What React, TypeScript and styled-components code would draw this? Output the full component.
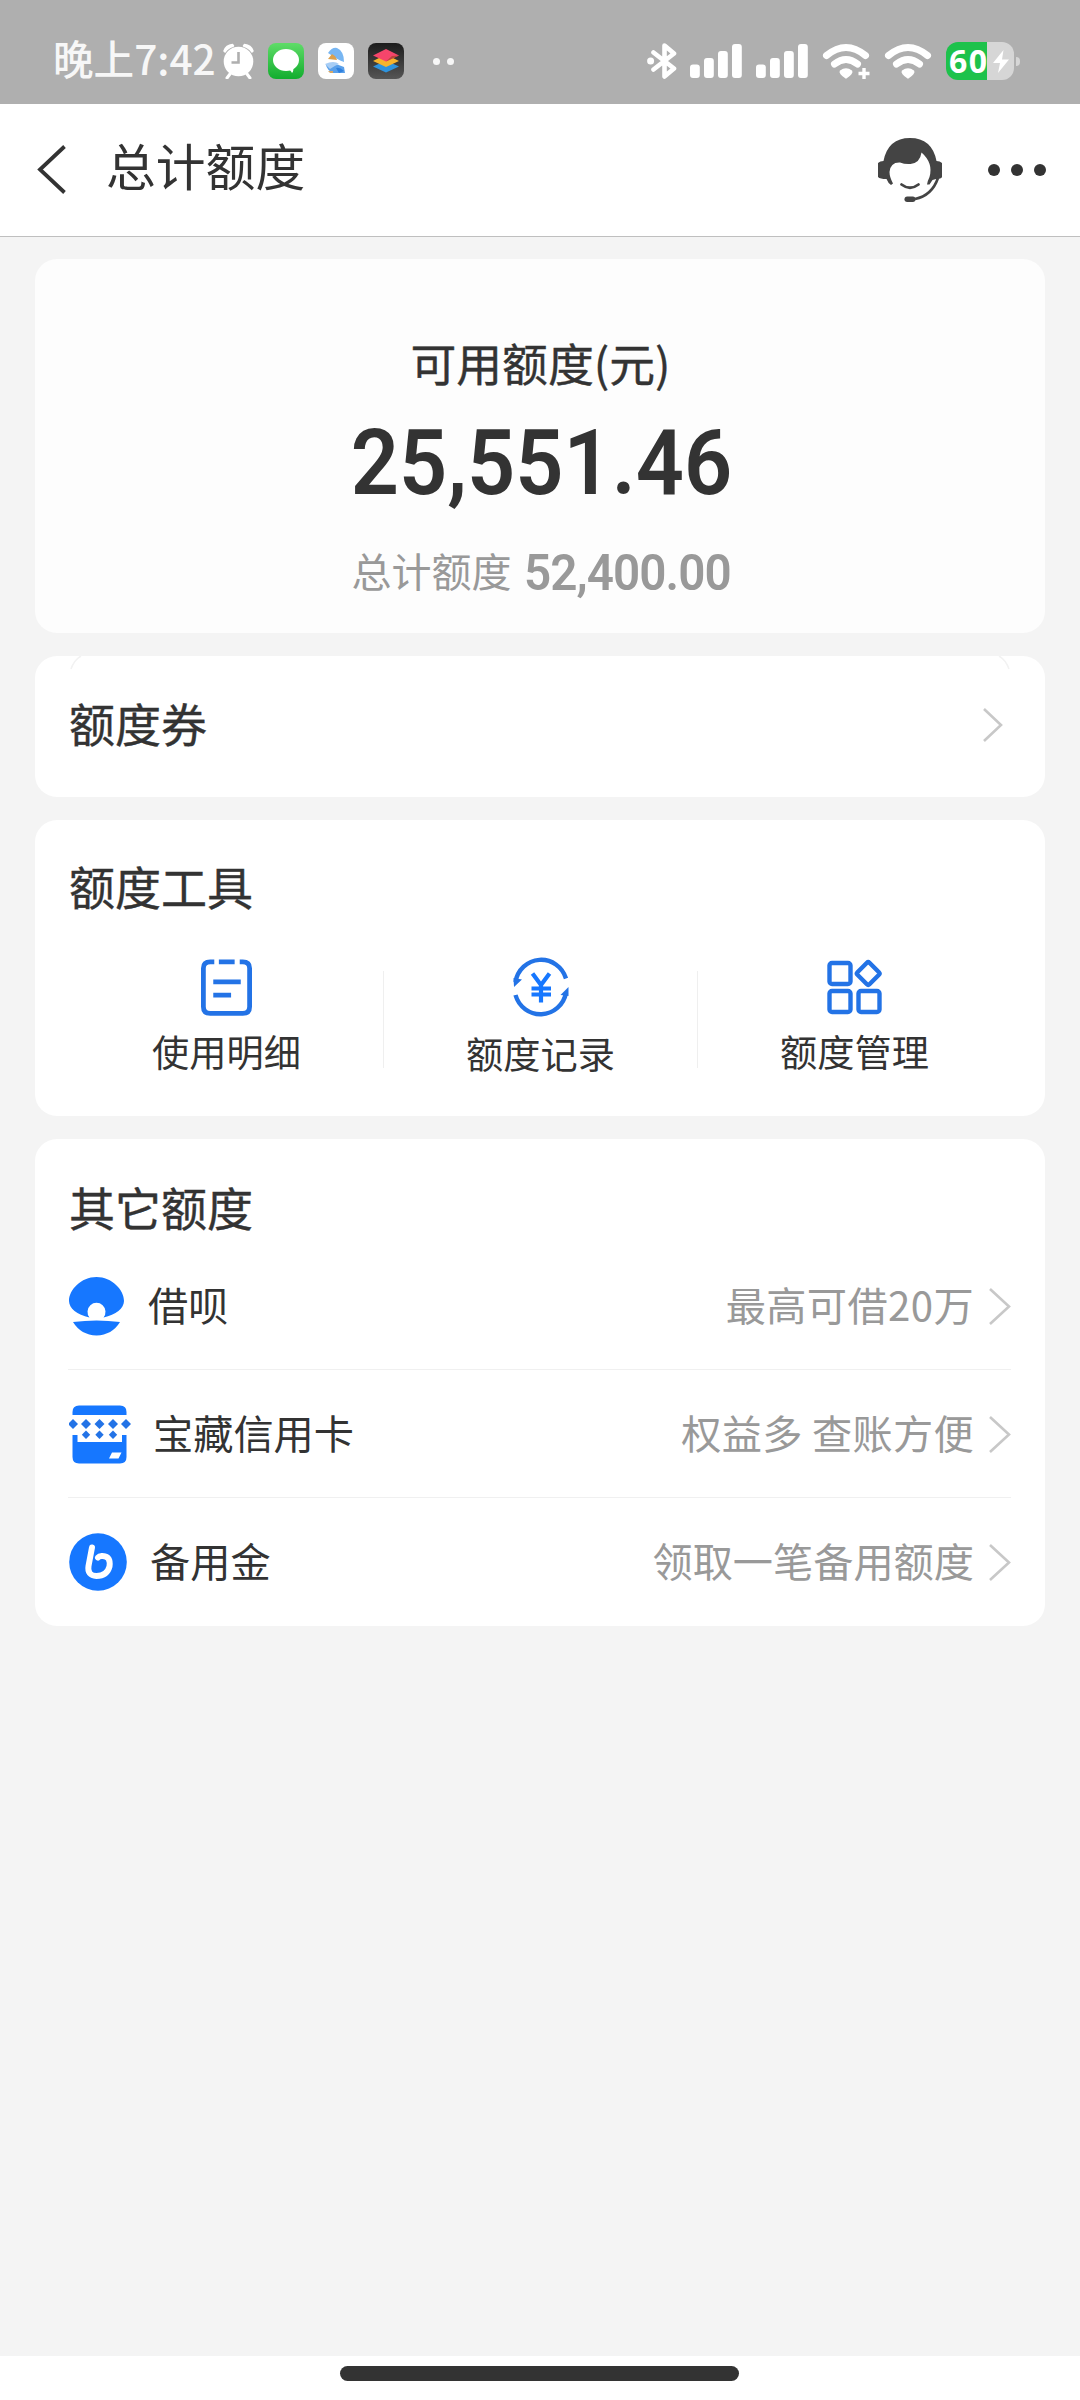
import React from "react";
import styled, { createGlobalStyle } from "styled-components";

const BLUE = "#1677ff";
const ICON_BLUE = "#2373e6";

const GlobalStyle = createGlobalStyle`
  * { box-sizing: border-box; }
  body { margin: 0; background: #f4f4f4; }
  svg { display: block; flex: none; }
`;

const Page = styled.div`
  width: 1080px;
  height: 2400px;
  display: flex;
  flex-direction: column;
  background: #f4f4f4;
  color: #333;
  font-family: "Noto Sans CJK SC", "Noto Sans", sans-serif;
  overflow: hidden;
  white-space: nowrap;
`;

const StatusBar = styled.header`
  height: 104px;
  flex: none;
  display: flex;
  align-items: center;
  justify-content: space-between;
  padding: 18px 60px 0 53px;
  background: #afafaf;
  color: #fff;
`;

const StatusGroup = styled.div`
  display: flex;
  align-items: center;
`;

const Clock = styled.span`
  width: 170px;
  font-size: 40.6px;
  font-weight: 500;
  line-height: 40px;
  padding-bottom: 6px;
  color: #f7f7f7;
`;

const AppBadge = styled.span<{ $bg: string; $gap: number }>`
  width: 36px;
  height: 36px;
  margin-left: ${(p) => p.$gap}px;
  border-radius: 8px;
  background: ${(p) => p.$bg};
  display: flex;
  align-items: center;
  justify-content: center;
  overflow: hidden;
`;

const MoreDots = styled.span`
  display: flex;
  gap: 7px;
  margin-left: 29px;
`;

const Dot = styled.i<{ $size: number; $color: string }>`
  width: ${(p) => p.$size}px;
  height: ${(p) => p.$size}px;
  border-radius: 50%;
  background: ${(p) => p.$color};
`;

const Spacer = styled.span<{ $w: number }>`
  width: ${(p) => p.$w}px;
`;

const Battery = styled.span`
  width: 68px;
  height: 38px;
  border-radius: 12px;
  display: flex;
  align-items: center;
  gap: 4px;
  padding-left: 3px;
  background: linear-gradient(90deg, #1dc24b 0 41px, #d6d6d6 41px);
`;

const BatteryLevel = styled.b`
  font-size: 32px;
  font-family: "Noto Sans", "Open Sans", sans-serif;
  font-weight: 700;
  line-height: 38px;
  width: 40px;
  letter-spacing: 1.5px;
  padding-bottom: 1px;
`;

const BatteryTip = styled.i`
  width: 4px;
  height: 9px;
  margin-left: 2px;
  border-radius: 0 4px 4px 0;
  background: #d6d6d6;
`;

const NavBar = styled.nav`
  height: 133px;
  flex: none;
  display: flex;
  align-items: center;
  padding: 0 34px 0 36px;
  background: #fff;
  border-bottom: 1px solid #bfbfbf;
`;

const NavTitle = styled.h1`
  flex: 1;
  margin: 0 0 0 38px;
  padding-bottom: 12px;
  font-size: 49.8px;
  line-height: 60px;
  font-weight: 400;
`;

const NavDots = styled.span`
  display: flex;
  gap: 11px;
  margin-left: 46px;
`;

const Content = styled.main`
  flex: 1;
  display: flex;
  flex-direction: column;
  padding: 22px 35px 0;
`;

const Card = styled.section<{ $h: number; $bg?: string }>`
  position: relative;
  height: ${(p) => p.$h}px;
  margin-bottom: 23px;
  border-radius: 22px;
  background: ${(p) => p.$bg ?? "#fff"};
  overflow: hidden;
`;

const Summary = styled.div`
  display: flex;
  flex-direction: column;
  align-items: center;
  padding-top: 76px;
`;

const SummaryLabel = styled.div`
  padding-left: 1px;
  font-size: 45.8px;
  line-height: 54px;
  font-weight: 400;
  -webkit-text-stroke: 0.4px #333;
`;

const Amount = styled.div`
  margin: 29px 0 0 3px;
  font-family: Roboto, sans-serif;
  font-size: 91px;
  line-height: 90px;
  font-weight: 600;
  transform: scaleX(0.928);
`;

const TotalLine = styled.div`
  display: flex;
  align-items: center;
  height: 60px;
  margin-top: 33px;
  color: #999;
`;

const TotalLabel = styled.span`
  font-size: 40px;
  line-height: 44px;
  padding-bottom: 3px;
`;

const TotalValue = styled.span`
  margin: 0 -12px 0 12px;
  padding-top: 4px;
  font-family: Roboto, sans-serif;
  font-size: 50px;
  line-height: 56px;
  font-weight: 600;
  letter-spacing: -1px;
  transform: scaleX(0.953);
  transform-origin: left center;
`;

const CouponRow = styled.div`
  display: flex;
  align-items: center;
  justify-content: space-between;
  height: 138px;
  padding: 0 42px 0 34px;
`;

const CouponTitle = styled.div`
  padding-bottom: 6px;
`;

const CornerArc = styled.svg<{ $side: "left" | "right" }>`
  position: absolute;
  top: 0;
  ${(p) => p.$side}: 35px;
`;

const CardTitle = styled.h2`
  margin: 0;
  font-size: 46px;
  line-height: 54px;
  font-weight: 400;
  -webkit-text-stroke: 0.4px #333;
`;

const TitleBox = styled.div<{ $top: number }>`
  padding: ${(p) => p.$top}px 34px 0;
`;

const ToolGrid = styled.div`
  display: grid;
  grid-template-columns: repeat(3, 314px);
  padding-left: 35px;
  margin-top: 43px;
`;

const Tool = styled.div`
  height: 140px;
  display: flex;
  flex-direction: column;
  align-items: center;
  padding-right: 1px;
  background: linear-gradient(#efefef, #efefef) right 16px / 1px 97px no-repeat;
  &:last-child { background: none; }
`;

const ToolIcon = styled.div`
  height: 64px;
  display: flex;
  align-items: center;
`;

const ToolLabel = styled.span<{ $drop: number }>`
  margin-top: ${(p) => 10 + p.$drop}px;
  font-size: 37.2px;
  line-height: 44px;
`;

const LimitList = styled.div`
  margin-top: 9px;
`;

const LimitRow = styled.div`
  height: 128px;
  margin: 0 34px 0 33px;
  padding: 2px 0 0 1px;
  display: flex;
  align-items: center;
  border-bottom: 1px solid #f0f0f0;
  font-size: 40.2px;
  line-height: 48px;
  &:last-child { border-bottom: 0; padding-top: 0; }
`;

const LimitName = styled.span<{ $gap: number }>`
  flex: 1;
  margin-left: ${(p) => p.$gap}px;
  padding-bottom: 5px;
`;

const LimitHint = styled.span<{ $tracking: number }>`
  margin-right: 15px;
  padding-bottom: 5px;
  color: #999;
  letter-spacing: ${(p) => p.$tracking}px;
`;

const HomeArea = styled.footer`
  height: 44px;
  flex: none;
  display: flex;
  justify-content: center;
  padding: 10px 1px 0 0;
  background: #fff;
`;

const HomeBar = styled.div`
  width: 399px;
  height: 15px;
  border-radius: 8px;
  background: #333;
`;

const Alarm = () => (
  <svg width="32" height="36" viewBox="0 0 32 36">
    <circle cx="15.500" cy="18.500" r="14.800" fill="#fff" />
    <path d="M1 8Q3 2 9.500 1.500L10.500 3Q5 4.500 2 9ZM30 8Q28 2 21.500 1.500L20.500 3Q26 4.500 29 9Z" fill="#fff" stroke="#fff" strokeWidth="1.500" strokeLinejoin="round" />
    <path d="M7 31l-3 4M24 31l3 4" stroke="#fff" strokeWidth="3" strokeLinecap="round" />
    <path d="M15.500 9v10.500H8.500" stroke="#afafaf" strokeWidth="2.600" fill="none" />
  </svg>
);

const Bluetooth = () => (
  <svg width="30" height="38" viewBox="0 0 30 38" fill="none" stroke="#fff" strokeWidth="4.600" strokeLinecap="round" strokeLinejoin="round">
    <path d="M6.500 10.500L27 26.500L17.500 34.500V3.500L27 11.500L6.500 27.500" />
    <circle cx="3.600" cy="19" r="3.500" fill="#fff" stroke="none" />
  </svg>
);

const Signal = () => (
  <svg width="52" height="36" viewBox="0 0 52 36" fill="#fff">
    <rect x="0" y="21.500" width="9.800" height="13.500" rx="3" />
    <rect x="14" y="15" width="9.800" height="20" rx="3" />
    <rect x="28" y="8" width="9.800" height="27" rx="3" />
    <rect x="42" y="1" width="9.800" height="34" rx="3" />
  </svg>
);

const Wifi = ({ plus = false }: { plus?: boolean }) => (
  <svg width="48" height="37" viewBox="0 0 48 37" fill="none" stroke="#fff" strokeLinecap="round">
    <path d="M4.500 12.500Q24 -3.500 43.500 12.500" strokeWidth="7" />
    <path d="M12.500 21Q24 12 35.500 21" strokeWidth="7" />
    <path d="M18.500 28Q24 24 29.500 28Q31 30 24 35Q17 30 18.500 28Z" fill="#fff" strokeWidth="1.500" strokeLinejoin="round" />
    {plus && <path d="M42 25v11M36.500 30.500h11" strokeWidth="3.400" strokeLinecap="butt" />}
  </svg>
);

const Headset = () => (
  <svg width="64" height="64" viewBox="0 0 64 64">
    <path
      fill="#444"
      d="M0 25Q2 23 5.500 23Q10 0 32 0Q54 0 58.500 23Q62 23 64 25V39Q63 41 58 41L54.500 42L51.500 46.500H49Q49.500 43 51.500 39Q55.500 25 43.500 14.500Q42 25 32.500 26Q27 26.500 22 24.500Q12.500 24 11.500 34Q11.500 39 15 45.500L13 47Q10 45 8.500 41Q2 41 0 39Z"
    />
    <path d="M60 40Q54 57.500 37 61" fill="none" stroke="#444" strokeWidth="2.600" />
    <rect x="26.500" y="58.500" width="11" height="5.500" rx="2.700" fill="#444" />
    <path d="M23.500 46.500Q32 53 40.500 46.500" fill="none" stroke="#444" strokeWidth="2.800" strokeLinecap="round" />
  </svg>
);

const Chevron = ({ w, h }: { w: number; h: number }) => (
  <svg width={w} height={h} viewBox={`0 0 ${w} ${h}`} fill="none" stroke="#c8c8c8" strokeWidth="2.600">
    <path d={`M1 1L${w - 2} ${h / 2}L1 ${h - 1}`} />
  </svg>
);

const NoteIcon = () => (
  <svg width="51" height="57" viewBox="0 0 50 56" fill="none" stroke={ICON_BLUE} strokeWidth="4.700">
    <path d="M13 2.800H9Q2.300 2.800 2.300 9V47Q2.300 53.500 9 53.500H41Q47.700 53.500 47.700 47V9Q47.700 2.800 41 2.800H38M17.500 2.800H33M12 22.500H39M12 35.500H29.500" />
  </svg>
);

const RecordIcon = () => (
  <svg width="56" height="60" viewBox="0 0 56 60" fill="none" stroke={ICON_BLUE} strokeWidth="4.400">
    <path d="M2.500 25A26 26.500 0 0 1 53 21.500M2.500 38A26 26.500 0 0 0 53 36" />
    <path d="M0.500 21L9 22.500L1 30ZM55.500 30L47.500 38L55.500 39Z" fill={ICON_BLUE} stroke="none" />
    <path d="M19.500 16.500L28 28L36.500 16.500M28 28V45.500M18.500 31.500H38M18.500 37.500H38" stroke={BLUE} strokeWidth="4.200" />
  </svg>
);

const ManageIcon = () => (
  <svg width="56" height="56" viewBox="0 0 56 56" fill="none" stroke={ICON_BLUE} strokeWidth="4.400" strokeLinejoin="round">
    <rect x="2.500" y="4" width="21" height="21" rx="2.500" />
    <rect x="2.500" y="32" width="21" height="21" rx="2.500" />
    <rect x="31.500" y="32" width="21" height="21" rx="2.500" />
    <rect x="32.700" y="6" width="17" height="17" rx="1.800" transform="rotate(45 41.200 14.500)" />
  </svg>
);

const JiebeiIcon = () => (
  <svg width="55" height="59" viewBox="0 0 55 59" fill={BLUE}>
    <path d="M27.500 0C43 0 55 13 55 24C55 31 47 38 34.500 40.500A9 9 0 1 0 20.500 40.500C8 38 0 31 0 24C0 13 12 0 27.500 0Z" />
    <path d="M4 45Q27.500 42 51 45Q43 58 27.500 58.500Q12 58 4 45Z" />
  </svg>
);

const CreditCardIcon = () => (
  <svg width="62" height="59" viewBox="0 0 62 59" fill={BLUE}>
    <path d="M3.500 10V7Q3.500 0.500 10 0.500H51Q57.500 0.500 57.500 7V10Z" />
    <path d="M3.500 30H8.500V37H53V30H57.500V52Q57.500 58.500 51 58.500H10Q3.500 58.500 3.500 52Z" />
    {[4, 17, 30.5, 44, 57].map((x) => (
      <path key={x} d={`M${x} 14l5 5l-5 5l-5 -5z`} fill={ICON_BLUE} />
    ))}
    {[17, 30.5, 44].map((x) => (
      <path key={x} d={`M${x} 25.500l4.200 4.200l-4.200 4.200l-4.200 -4.200z`} fill={ICON_BLUE} />
    ))}
    <path d="M43 47.500H52.500L49.500 53.500H40Z" fill="#fff" />
  </svg>
);

const ReserveIcon = () => (
  <svg width="58" height="58" viewBox="0 0 58 58">
    <circle cx="29" cy="29" r="28.800" fill={BLUE} />
    <path
      d="M23 14.500L19.500 33Q18 42.500 27.500 43Q38 43 40.500 33.500Q42 23.500 34 23Q30.500 22.500 29 24.500"
      fill="none"
      stroke="#fff"
      strokeWidth="6"
      strokeLinecap="round"
      strokeLinejoin="round"
    />
  </svg>
);

const tools = [
  { label: "使用明细", icon: <NoteIcon />, drop: 0 },
  { label: "额度记录", icon: <RecordIcon />, drop: 2 },
  { label: "额度管理", icon: <ManageIcon />, drop: 0 },
];

const limits = [
  { name: "借呗", hint: "最高可借20万", icon: <JiebeiIcon />, gap: 24, tracking: 0.4 },
  { name: "宝藏信用卡", hint: "权益多 查账方便", icon: <CreditCardIcon />, gap: 22, tracking: 0.3 },
  { name: "备用金", hint: "领取一笔备用额度", icon: <ReserveIcon />, gap: 23, tracking: 0 },
];

export default function App() {
  return (
    <Page>
      <GlobalStyle />
      <StatusBar>
        <StatusGroup>
          <Clock>晚上7:42</Clock>
          <Alarm />
          <AppBadge $bg="linear-gradient(#5fdc68, #12ad2e)" $gap={13}>
            <svg width="28" height="26" viewBox="0 0 28 26" fill="#fff">
              <ellipse cx="14" cy="12" rx="13" ry="11" />
              <path d="M15 21Q19 22 20 25Q22 23 21 19Z" />
            </svg>
          </AppBadge>
          <AppBadge $bg="#fff" $gap={14}>
            <svg width="24" height="28" viewBox="0 0 24 28">
              <path d="M4 6Q8 0 13 1Q20 4 20 15Q14 13 4 6Z" fill="#78b6f2" />
              <path d="M8 7Q12 9 13 13L4 12Z" fill="#dca04c" />
              <path d="M2 18Q10 15 20 20L21 26H9Q3 23 2 18Z" fill="#5aa0ea" />
              <path d="M1 17Q10 13 15 17Q10 19 6 22Z" fill="#a7cdf5" />
              <path d="M12 21Q16 20 20 24L15 26Z" fill="#2f80de" />
              <path d="M4 24h5v2H6z" fill="#d6a868" />
            </svg>
          </AppBadge>
          <AppBadge $bg="linear-gradient(#1c1c1c, #555)" $gap={14}>
            <svg width="26" height="26" viewBox="0 0 26 26">
              <path d="M13 12.500L26 18.500L13 24.500L0 18.500Z" fill="#2e93dd" />
              <path d="M13 6.500L26 13L13 19L0 13Z" fill="#f6b42c" />
              <path d="M13 1L26 7.500L13 13.500L0 7.500Z" fill="#f5456b" />
              <path d="M26 7.500L13 13.500L19 8Z" fill="#b8473a" />
            </svg>
          </AppBadge>
          <MoreDots>
            <Dot $size={7} $color="#f7f7f7" />
            <Dot $size={7} $color="#f7f7f7" />
          </MoreDots>
        </StatusGroup>
        <StatusGroup>
          <Bluetooth />
          <Spacer $w={13} />
          <Signal />
          <Spacer $w={14} />
          <Signal />
          <Spacer $w={14} />
          <Wifi plus />
          <Spacer $w={14} />
          <Wifi />
          <Spacer $w={14} />
          <Battery>
            <BatteryLevel>60</BatteryLevel>
            <svg width="16" height="23" viewBox="0 0 16 23" fill="#fff">
              <path d="M10.500 0L0 13H7L5 23L16 9.500H9Z" />
            </svg>
          </Battery>
          <BatteryTip />
        </StatusGroup>
      </StatusBar>

      <NavBar>
        <svg width="32" height="50" viewBox="0 0 32 50" fill="none" stroke="#333" strokeWidth="3.800">
          <path d="M28.500 1.500L4 24.500L28.500 47.500" />
        </svg>
        <NavTitle>总计额度</NavTitle>
        <Headset />
        <NavDots>
          <Dot $size={12} $color="#333" />
          <Dot $size={12} $color="#333" />
          <Dot $size={12} $color="#333" />
        </NavDots>
      </NavBar>

      <Content>
        <Card $h={374} $bg="#fdfdfd">
          <Summary>
            <SummaryLabel>可用额度(元)</SummaryLabel>
            <Amount>25,551.46</Amount>
            <TotalLine>
              <TotalLabel>总计额度</TotalLabel>
              <TotalValue>52,400.00</TotalValue>
            </TotalLine>
          </Summary>
        </Card>

        <Card $h={141}>
          <CornerArc $side="left" width="14" height="14" viewBox="0 0 14 14" fill="none" stroke="#f2f2f2" strokeWidth="1.500">
            <path d="M1 13Q4 4 11 0" />
          </CornerArc>
          <CornerArc $side="right" width="14" height="14" viewBox="0 0 14 14" fill="none" stroke="#f2f2f2" strokeWidth="1.500">
            <path d="M13 13Q10 4 3 0" />
          </CornerArc>
          <CouponRow>
            <CouponTitle>
              <CardTitle>额度券</CardTitle>
            </CouponTitle>
            <Chevron w={20} h={34} />
          </CouponRow>
        </Card>

        <Card $h={296}>
          <TitleBox $top={38}>
            <CardTitle>额度工具</CardTitle>
          </TitleBox>
          <ToolGrid>
            {tools.map((t) => (
              <Tool key={t.label}>
                <ToolIcon>{t.icon}</ToolIcon>
                <ToolLabel $drop={t.drop}>{t.label}</ToolLabel>
              </Tool>
            ))}
          </ToolGrid>
        </Card>

        <Card $h={487}>
          <TitleBox $top={40}>
            <CardTitle>其它额度</CardTitle>
          </TitleBox>
          <LimitList>
            {limits.map((l) => (
              <LimitRow key={l.name}>
                {l.icon}
                <LimitName $gap={l.gap}>{l.name}</LimitName>
                <LimitHint $tracking={l.tracking}>{l.hint}</LimitHint>
                <Chevron w={22} h={37} />
              </LimitRow>
            ))}
          </LimitList>
        </Card>
      </Content>

      <HomeArea>
        <HomeBar />
      </HomeArea>
    </Page>
  );
}
